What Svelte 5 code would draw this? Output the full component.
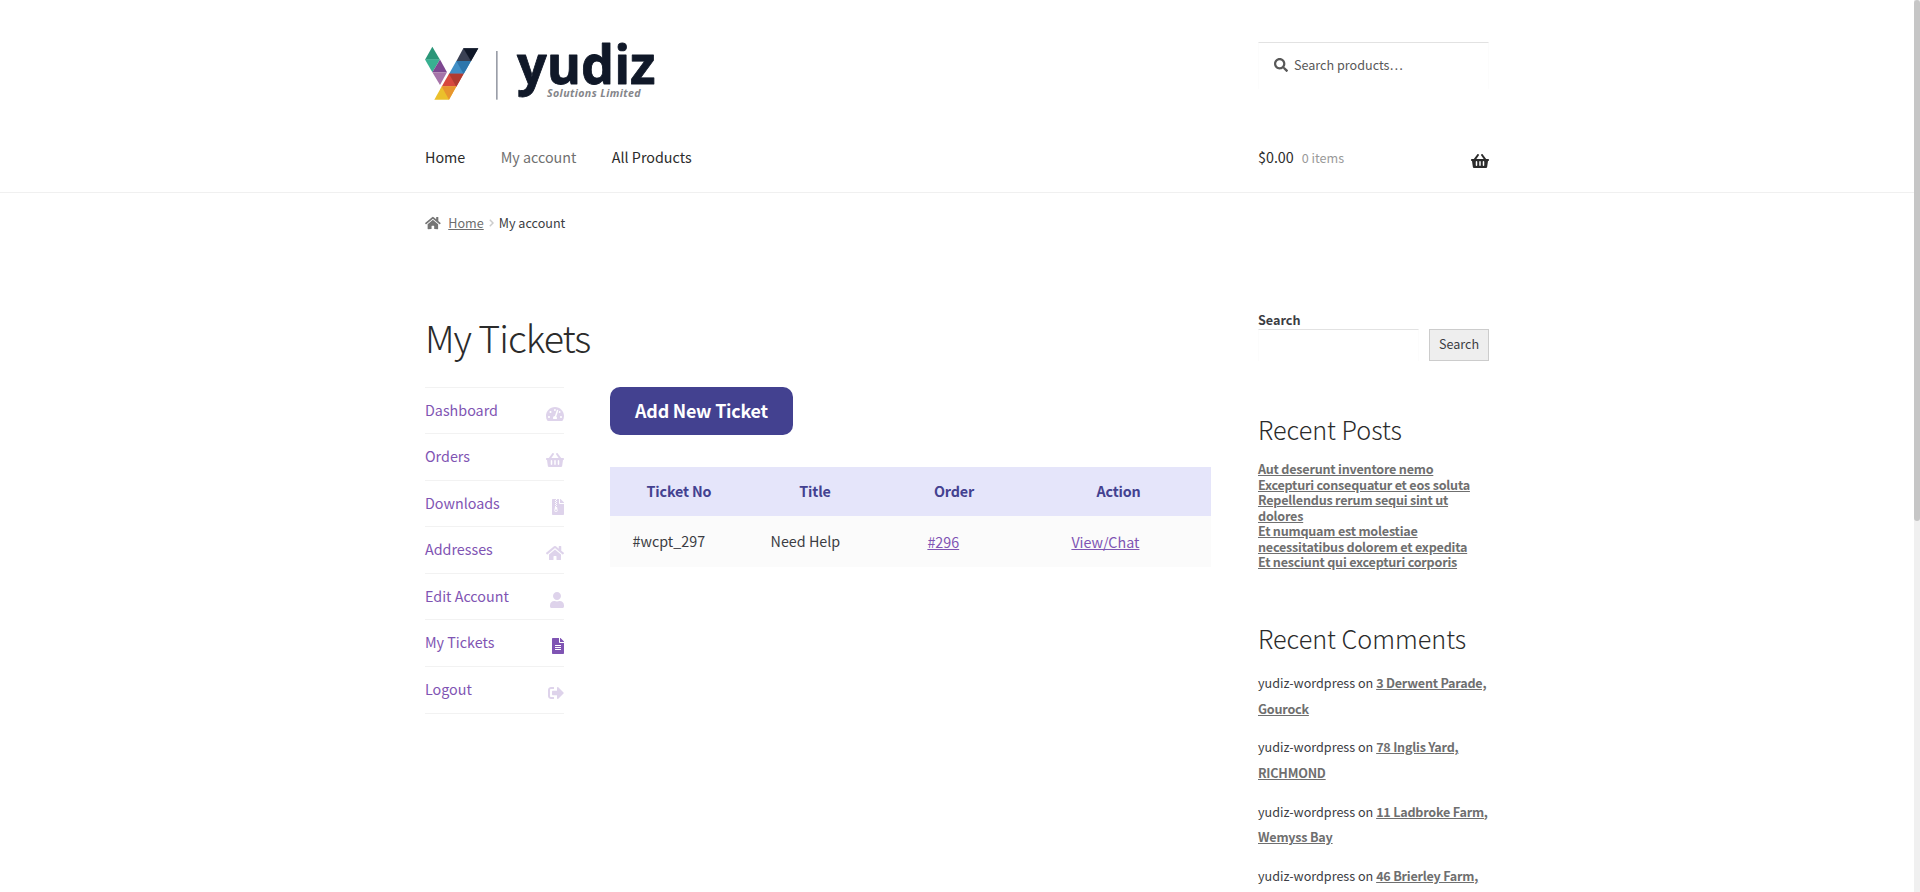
<script>
  const nav = ['Home', 'My account', 'All Products'];
  const icons = {
    dash: { w: 576, d: 'M288 32C128.94 32 0 160.94 0 320c0 52.8 14.25 102.26 39.06 144.8 5.61 9.62 16.3 15.2 27.44 15.2h443c11.14 0 21.83-5.58 27.44-15.2C561.75 422.26 576 372.8 576 320c0-159.06-128.94-288-288-288zm0 64c14.71 0 26.58 10.13 30.32 23.65-1.11 2.26-2.64 4.23-3.45 6.67l-9.22 27.67c-5.13 3.49-10.97 6.01-17.64 6.01-17.67 0-32-14.33-32-32S270.33 96 288 96zM96 384c-17.67 0-32-14.33-32-32s14.33-32 32-32 32 14.33 32 32-14.33 32-32 32zm48-160c-17.67 0-32-14.33-32-32s14.33-32 32-32 32 14.33 32 32-14.33 32-32 32zm246.77-72.41l-61.33 184C343.13 347.33 352 364.54 352 384c0 11.72-3.38 22.55-8.88 32H232.88c-5.5-9.45-8.88-20.28-8.88-32 0-33.94 26.5-61.43 59.9-63.59l61.34-184.01c4.17-12.56 17.73-19.45 30.36-15.17 12.57 4.19 19.35 17.79 15.17 30.36zm14.66 57.2l15.52-46.55c3.47-1.29 7.13-2.23 11.05-2.23 17.67 0 32 14.33 32 32s-14.33 32-32 32c-11.38-.01-20.89-6.28-26.57-15.22zM480 384c-17.67 0-32-14.33-32-32s14.33-32 32-32 32 14.33 32 32-14.33 32-32 32z' },
    basket: { w: 576, d: 'M576 216v16c0 13.255-10.745 24-24 24h-8l-26.113 182.788C514.509 462.435 494.257 480 470.37 480H105.63c-23.887 0-44.139-17.565-47.518-41.212L32 256h-8c-13.255 0-24-10.745-24-24v-16c0-13.255 10.745-24 24-24h67.341l106.78-146.821c10.395-14.292 30.407-17.453 44.701-7.058 14.293 10.395 17.453 30.408 7.058 44.701L170.477 192h235.046L326.12 82.821c-10.395-14.292-7.234-34.306 7.059-44.701 14.291-10.395 34.306-7.235 44.701 7.058L484.659 192H552c13.255 0 24 10.745 24 24zM312 392V280c0-13.255-10.745-24-24-24s-24 10.745-24 24v112c0 13.255 10.745 24 24 24s24-10.745 24-24zm112 0V280c0-13.255-10.745-24-24-24s-24 10.745-24 24v112c0 13.255 10.745 24 24 24s24-10.745 24-24zm-224 0V280c0-13.255-10.745-24-24-24s-24 10.745-24 24v112c0 13.255 10.745 24 24 24s24-10.745 24-24z' },
    zip: { w: 384, d: 'M377 105L279.1 7c-4.5-4.5-10.6-7-17-7H256v128h128v-6.1c0-6.3-2.5-12.4-7-16.9zM128.4 336c-17.9 0-32.4 12.1-32.4 27 0 15 14.6 27 32.5 27s32.5-12.1 32.5-27-14.6-27-32.6-27zM224 136V0h-63.6v32h-32V0H24C10.7 0 0 10.7 0 24v464c0 13.3 10.7 24 24 24h336c13.3 0 24-10.7 24-24V160H248c-13.2 0-24-10.8-24-24zM95.9 32h32v32h-32zm32.3 384c-33.2 0-58-30.4-51.4-62.9L96.4 256v-32h32v-32h-32v-32h32v-32h-32V96h32V64h32v32h-32v32h32v32h-32v32h32v32h-32v32h22.1c5.7 0 10.7 4.1 11.8 9.7l17.3 87.7c6.4 32.4-18.4 62.6-51.4 62.6z' },
    home: { w: 576, d: 'M280.37 148.26L96 300.11V464a16 16 0 0 0 16 16l112.06-.29a16 16 0 0 0 15.92-16V368a16 16 0 0 1 16-16h64a16 16 0 0 1 16 16v95.64a16 16 0 0 0 16 16.05L464 480a16 16 0 0 0 16-16V300L295.67 148.26a12.19 12.19 0 0 0-15.3 0zM571.6 251.47L488 182.56V44.05a12 12 0 0 0-12-12h-56a12 12 0 0 0-12 12v72.61L318.47 43a48 48 0 0 0-61 0L4.34 251.47a12 12 0 0 0-1.6 16.9l25.5 31A12 12 0 0 0 45.15 301l235.22-193.74a12.19 12.19 0 0 1 15.3 0L530.9 301a12 12 0 0 0 16.9-1.6l25.5-31a12 12 0 0 0-1.7-16.93z' },
    user: { w: 448, d: 'M224 256c70.7 0 128-57.3 128-128S294.7 0 224 0 96 57.3 96 128s57.3 128 128 128zm89.6 32h-16.7c-22.2 10.2-46.9 16-72.9 16s-50.6-5.8-72.9-16h-16.7C60.2 288 0 348.2 0 422.4V464c0 26.5 21.5 48 48 48h352c26.5 0 48-21.5 48-48v-41.6c0-74.2-60.2-134.4-134.4-134.4z' },
    file: { w: 384, d: 'M224 136V0H24C10.7 0 0 10.7 0 24v464c0 13.3 10.7 24 24 24h336c13.3 0 24-10.7 24-24V160H248c-13.2 0-24-10.8-24-24zm64 236c0 6.6-5.4 12-12 12H108c-6.6 0-12-5.4-12-12v-8c0-6.6 5.4-12 12-12h168c6.6 0 12 5.4 12 12v8zm0-64c0 6.6-5.4 12-12 12H108c-6.6 0-12-5.4-12-12v-8c0-6.6 5.4-12 12-12h168c6.6 0 12 5.4 12 12v8zm0-72v8c0 6.6-5.4 12-12 12H108c-6.6 0-12-5.4-12-12v-8c0-6.6 5.4-12 12-12h168c6.6 0 12 5.4 12 12zm96-114.1v6.1H256V0h6.1c6.4 0 12.5 2.5 17 7l97.9 98c4.5 4.5 7 10.6 7 16.9z' },
    out: { w: 512, d: 'M497 273L329 441c-15 15-41 4.5-41-17v-96H152c-13.3 0-24-10.7-24-24v-96c0-13.3 10.7-24 24-24h136V88c0-21.4 25.9-32 41-17l168 168c9.3 9.4 9.3 24.6 0 34zM192 436v-40c0-6.6-5.4-12-12-12H96c-17.7 0-32-14.3-32-32V160c0-17.7 14.3-32 32-32h84c6.6 0 12-5.4 12-12V76c0-6.6-5.4-12-12-12H96c-53 0-96 43-96 96v192c0 53 43 96 96 96h84c6.6 0 12-5.4 12-12z' },
    search: { w: 512, d: 'M505 442.7L405.3 343c-4.5-4.5-10.6-7-17-7H372c27.6-35.3 44-79.7 44-128C416 93.1 322.9 0 208 0S0 93.1 0 208s93.1 208 208 208c48.3 0 92.7-16.4 128-44v16.3c0 6.4 2.5 12.5 7 17l99.7 99.7c9.4 9.4 24.6 9.4 33.9 0l28.3-28.3c9.4-9.4 9.4-24.6.1-34zM208 336c-70.7 0-128-57.2-128-128 0-70.7 57.2-128 128-128 70.7 0 128 57.2 128 128 0 70.7-57.2 128-128 128z' }
  };
  const account = [
    ['Dashboard', 'dash'], ['Orders', 'basket'], ['Downloads', 'zip'], ['Addresses', 'home'],
    ['Edit Account', 'user'], ['My Tickets', 'file'], ['Logout', 'out']
  ];
  const posts = [
    'Aut deserunt inventore nemo', 'Excepturi consequatur et eos soluta', 'Repellendus rerum sequi sint ut dolores',
    'Et numquam est molestiae necessitatibus dolorem et expedita', 'Et nesciunt qui excepturi corporis'
  ];
  const comments = ['3 Derwent Parade, Gourock', '78 Inglis Yard, RICHMOND', '11 Ladbroke Farm, Wemyss Bay', '46 Brierley Farm,'];
</script>

{#snippet icon(name, size)}
  <svg class="icon" viewBox="0 0 {icons[name].w} 512" width={(icons[name].w / 512) * size} height={size}><path d={icons[name].d} /></svg>
{/snippet}

<div class="page">
  <header>
    <div class="wrap top">
      <svg class="logo" viewBox="45 24 700 189" width="233.3" height="63" role="img">
        <path fill="#2b9678" d="M67 50 45 89H90z" />
        <path fill="#38b091" d="M45 88.5H90L67 127z" />
        <path fill="#7d4790" d="M90 88.5 67 127H111z" />
        <path fill="#a674a9" d="M67 126.5H111L90 165z" />
        <path fill="#3a4154" d="M160 55H205L183 94H139z" />
        <path fill="#101828" d="M160 55H205L183 93z" />
        <path fill="#418fc6" d="M139 93H183L161 132H117z" />
        <path fill="#2e76ac" d="M139 93H183L161 132z" />
        <path fill="#d7483d" d="M117 131.5H161L139 170H95z" />
        <path fill="#b13b30" d="M117 131.5H161L139 170z" />
        <path fill="#ebc02b" d="M95 169.5H139L117 209H73z" />
        <path fill="#e8952e" d="M95 169.5H139L117 209z" />
        <path fill="#9a9ea8" d="M258 63h5v146h-5z" />
        <text class="brand" x="321" y="160.5" textLength="416" lengthAdjust="spacingAndGlyphs">yudiz</text>
        <text class="sub" x="411" y="201" textLength="281">Solutions Limited</text>
      </svg>
      <div class="product-search">{@render icon('search', 14)}<span>Search products…</span></div>
    </div>
    <div class="wrap bar">
      <nav>
        {#each nav as item, i}<a class:current={i === 1} href="#top">{item}</a>{/each}
      </nav>
      <div class="cart"><span class="amount">$0.00</span><span class="count">0 items</span>{@render icon('basket', 16)}</div>
    </div>
  </header>

  <div class="wrap crumbs">
    {@render icon('home', 14)}<a href="#top">Home</a>
    <svg class="chevron" viewBox="0 0 5 8" width="5" height="8"><path d="M.8.8 4 4 .8 7.2" /></svg>
    <span>My account</span>
  </div>

  <div class="wrap columns">
    <main>
      <h1>My Tickets</h1>
      <div class="account">
        <ul class="menu">
          {#each account as [label, glyph]}
            <li class:active={label === 'My Tickets'}><a href="#top">{label}</a>{@render icon(glyph, 16)}</li>
          {/each}
        </ul>
        <section>
          <button class="add">Add New Ticket</button>
          <table>
            <thead><tr><th>Ticket No</th><th>Title</th><th>Order</th><th>Action</th></tr></thead>
            <tbody><tr><td>#wcpt_297</td><td>Need Help</td><td><a href="#top">#296</a></td><td><a href="#top">View/Chat</a></td></tr></tbody>
          </table>
        </section>
      </div>
    </main>
    <aside>
      <b class="label">Search</b>
      <div class="search-row"><div class="field"></div><button>Search</button></div>
      <h2 class="h-posts">Recent Posts</h2>
      <ul class="posts">{#each posts as p}<li><a href="#top">{p}</a></li>{/each}</ul>
      <h2 class="h-comments">Recent Comments</h2>
      <ul class="comments">{#each comments as c}<li>yudiz-wordpress on <a href="#top">{c}</a></li>{/each}</ul>
    </aside>
  </div>
  <div class="scroll"><div></div></div>
</div>

<style>
  :global(body) { background: #fff; overflow: hidden; }
  .page { position: relative; height: 892px; overflow: hidden; color: #3b3d43; font: 400 14.32px/26px "Noto Sans CJK SC", "Noto Sans", sans-serif; }
  .wrap { width: 1064px; margin-left: 425px; box-sizing: border-box; }
  ul { list-style: none; margin: 0; padding: 0; }
  .icon { fill: currentColor; flex: none; display: block; }
  header { height: 193px; box-sizing: border-box; border-bottom: 1px solid #f0f0f0; }
  .top { display: flex; justify-content: space-between; align-items: flex-start; height: 132px; padding-top: 38px; }
  .logo { display: block; overflow: visible; }
  .brand { font: 700 159px "Open Sans", sans-serif; fill: #101828; stroke: #101828; stroke-width: 2.5; stroke-linejoin: round; }
  .sub { font: italic 700 32px "Open Sans", sans-serif; fill: #85868a; }
  .product-search { width: 231px; height: 47px; margin-top: 4px; box-sizing: border-box; display: flex; align-items: center; padding: 0 0 2px 15px; gap: 6px; border: 1px solid #fcfcfc; border-top-color: #e2e2e2; border-bottom: 0; font-size: 12.6px; color: #585858; }
  .bar { display: flex; justify-content: space-between; }
  nav { display: flex; gap: 35.4px; line-height: 50px; }
  nav a { color: #2b2b2b; text-decoration: none; }
  nav a.current { color: #707070; }
  .cart { width: 231px; display: flex; color: #2b2b2b; line-height: 50px; }
  .count { color: #999; font-size: 12.6px; line-height: 52px; margin-left: 8px; }
  .cart .icon { margin: 21px 0 0 auto; }
  .crumbs { display: flex; align-items: center; height: 60px; font-size: 12.6px; }
  .crumbs .icon { color: #757575; margin-right: 7.5px; }
  .crumbs a { color: #6d6d6d; }
  .chevron { fill: none; stroke: #ccc; stroke-width: 1.5; margin: 0 5px; }
  .columns { display: flex; justify-content: space-between; padding-top: 54px; }
  main { width: 786px; }
  h1, h2 { font-weight: 300; color: #2b2b2b; margin: 0; }
  h1 { font-size: 37.6px; line-height: 50px; letter-spacing: -1px; padding-top: 5px; margin-bottom: 25px; }
  .account { display: flex; justify-content: space-between; }
  .menu { width: 139px; border-top: 1px solid #f2f2f2; }
  .menu li { display: flex; justify-content: space-between; height: 46.6px; box-sizing: border-box; border-bottom: 1px solid #f2f2f2; color: #7f54b3; line-height: 44px; }
  .menu li:first-child { height: 46px; }
  .menu a { color: #7f54b3; text-decoration: none; }
  .menu .icon { margin-top: 18px; opacity: .25; }
  .menu .active .icon { opacity: 1; }
  section { width: 601px; }
  .add { display: block; width: 183px; height: 48px; padding: 0 0 2px; border: 0; border-radius: 10px; background: #434190; color: #fff; font: 700 17.9px/46px "Noto Sans CJK SC", sans-serif; letter-spacing: -.22px; }
  table { margin-top: 32px; width: 601px; border-collapse: collapse; table-layout: fixed; }
  th { height: 47px; padding: 0 0 2px; background: #e5e5fa; color: #434190; font-weight: 700; letter-spacing: -.15px; }
  th:nth-child(1) { width: 138px; } th:nth-child(2) { width: 134px; } th:nth-child(3) { width: 144px; }
  td { height: 49px; padding: 0 0 2px 22.6px; background: #fbfbfb; }
  td:nth-child(n+3) { height: 51px; padding: 0 0 0 45.4px; }
  td a { color: #7f54b3; }
  aside { width: 231px; font-size: 12.6px; }
  .label { display: block; line-height: 22px; padding-top: 2px; height: 20px; }
  .search-row { display: flex; gap: 10px; }
  .field { flex: 1; height: 32px; box-sizing: border-box; border: 1px solid #fcfcfc; border-top-color: #e2e2e2; border-bottom: 0; }
  .search-row button { width: 60px; height: 32px; padding: 0 0 3px; border: 1px solid #ccc; background: #eee; color: #3b3d43; font: 400 12.6px "Noto Sans CJK SC", sans-serif; }
  h2 { font-size: 25.2px; line-height: 36px; }
  .h-posts { margin: 50px 0 14px; }
  .posts { line-height: 15.5px; }
  .posts a, .comments a { color: #6f6f6f; font-weight: 700; letter-spacing: -.22px; }
  .h-comments { margin: 50px 0 14.5px; }
  .comments { line-height: 25.5px; }
  .comments li { margin-bottom: 13.3px; }
  .scroll { position: absolute; top: 0; right: 0; width: 6px; height: 892px; background: #f0f0f0; }
  .scroll div { height: 521px; border-radius: 3px; background: #c6c6c6; }
</style>
